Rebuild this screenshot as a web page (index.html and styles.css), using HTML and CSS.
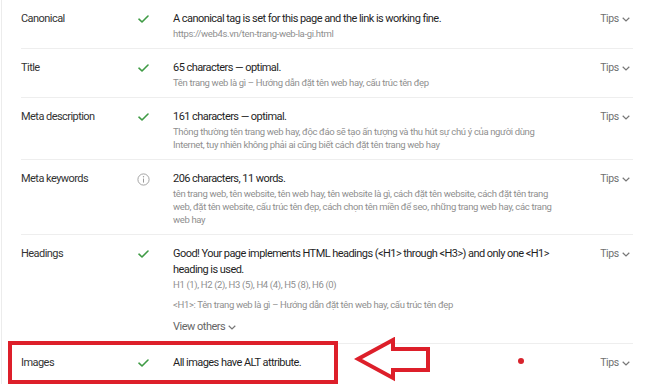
FILE: index.html
```html
<!DOCTYPE html>
<html lang="vi">

<head>
    <meta charset="UTF-8">
    <title>SEO Audit | Web4s</title>
    <link rel="stylesheet" href="styles.css">
</head>

<body>
    <div class="audit">
        <div class="row">
            <div class="label">Canonical</div>
            <div class="status">
                <svg class="check" width="11" height="8" viewBox="0 0 11 8"><polyline points="1,4.2 4,7 10,1" /></svg>
            </div>
            <div class="content">
                <p class="main">A canonical tag is set for this page and the link is working fine.</p>
                <p class="sub">https://web4s.vn/ten-trang-web-la-gi.html</p>
            </div>
            <div class="tips">Tips <svg class="chev" width="8" height="5" viewBox="0 0 8 5"><polyline points="0.7,0.8 4,4 7.3,0.8" /></svg></div>
        </div>

        <div class="row">
            <div class="label">Title</div>
            <div class="status">
                <svg class="check" width="11" height="8" viewBox="0 0 11 8"><polyline points="1,4.2 4,7 10,1" /></svg>
            </div>
            <div class="content">
                <p class="main">65 characters — optimal.</p>
                <p class="sub">Tên trang web là gì – Hướng dẫn đặt tên web hay, cấu trúc tên đẹp</p>
            </div>
            <div class="tips">Tips <svg class="chev" width="8" height="5" viewBox="0 0 8 5"><polyline points="0.7,0.8 4,4 7.3,0.8" /></svg></div>
        </div>

        <div class="row">
            <div class="label">Meta description</div>
            <div class="status">
                <svg class="check" width="11" height="8" viewBox="0 0 11 8"><polyline points="1,4.2 4,7 10,1" /></svg>
            </div>
            <div class="content">
                <p class="main">161 characters — optimal.</p>
                <p class="sub">Thông thường tên trang web hay, độc đáo sẽ tạo ấn tượng và thu hút sự chú ý của người dùng Internet, tuy nhiên không phải ai cũng biết cách đặt tên trang web hay</p>
            </div>
            <div class="tips">Tips <svg class="chev" width="8" height="5" viewBox="0 0 8 5"><polyline points="0.7,0.8 4,4 7.3,0.8" /></svg></div>
        </div>

        <div class="row">
            <div class="label">Meta keywords</div>
            <div class="status">
                <svg class="info" width="13" height="13" viewBox="0 0 13 13">
                    <circle cx="6.5" cy="6.5" r="5.6" />
                    <line x1="6.5" y1="5.6" x2="6.5" y2="9.6" />
                    <circle class="dot" cx="6.5" cy="3.8" r="0.7" />
                </svg>
            </div>
            <div class="content">
                <p class="main">206 characters, 11 words.</p>
                <p class="sub">tên trang web, tên website, tên web hay, tên website là gì, cách đặt tên website, cách đặt tên trang web, đặt tên website, cấu trúc tên đẹp, cách chọn tên miền để seo, những trang web hay, các trang web hay</p>
            </div>
            <div class="tips">Tips <svg class="chev" width="8" height="5" viewBox="0 0 8 5"><polyline points="0.7,0.8 4,4 7.3,0.8" /></svg></div>
        </div>

        <div class="row">
            <div class="label">Headings</div>
            <div class="status">
                <svg class="check" width="11" height="8" viewBox="0 0 11 8"><polyline points="1,4.2 4,7 10,1" /></svg>
            </div>
            <div class="content">
                <p class="main">Good! Your page implements HTML headings (&lt;H1&gt; through &lt;H3&gt;) and only one &lt;H1&gt; heading is used.</p>
                <p class="sub">H1 (1), H2 (2), H3 (5), H4 (4), H5 (8), H6 (0)</p>
                <p class="sub h1-line">&lt;H1&gt;: Tên trang web là gì – Hướng dẫn đặt tên web hay, cấu trúc tên đẹp</p>
                <a class="view-others" href="#">View others <svg class="chev" width="8" height="5" viewBox="0 0 8 5"><polyline points="0.7,0.8 4,4 7.3,0.8" /></svg></a>
            </div>
            <div class="tips">Tips <svg class="chev" width="8" height="5" viewBox="0 0 8 5"><polyline points="0.7,0.8 4,4 7.3,0.8" /></svg></div>
        </div>

        <div class="row last">
            <div class="label">Images</div>
            <div class="status">
                <svg class="check" width="11" height="8" viewBox="0 0 11 8"><polyline points="1,4.2 4,7 10,1" /></svg>
            </div>
            <div class="content">
                <p class="main">All images have ALT attribute.</p>
            </div>
            <div class="tips">Tips <svg class="chev" width="8" height="5" viewBox="0 0 8 5"><polyline points="0.7,0.8 4,4 7.3,0.8" /></svg></div>

            <span class="mark-box"></span>
            <svg class="mark-arrow" width="78" height="45" viewBox="0 0 78 45">
                <polygon points="4,22 39,3 39,12 74,12 74,33 39,33 39,41" />
            </svg>
            <span class="mark-dot"></span>
        </div>
    </div>
</body>

</html>
```

FILE: styles.css
```css
body {
    margin: 0;
    font-family: 'Roboto', 'Noto Sans', sans-serif;
    background: #fff;
    color: #222;
}

.audit {
    padding: 0 17px 0 19px;
    border-left: 1px solid #ececec;
    margin-left: 1px;
    height: 384px;
    overflow: hidden;
}

.row {
    position: relative;
    display: grid;
    grid-template-columns: 108px 28px 398px 1fr;
    padding: 11px 0 8px;
    border-bottom: 1px solid #eeeeee;
}

.row.last {
    border-bottom: none;
}

.label {
    font-size: 11px;
    letter-spacing: -0.55px;
    line-height: 16px;
    color: #333;
}

.status {
    display: flex;
    justify-content: center;
    height: 16px;
    align-items: center;
}

.check polyline {
    fill: none;
    stroke: #3f9b45;
    stroke-width: 1.6;
    stroke-linecap: round;
    stroke-linejoin: round;
}

.info circle {
    fill: none;
    stroke: #9a9a9a;
    stroke-width: 0.9;
}

.info line {
    stroke: #9a9a9a;
    stroke-width: 1;
}

.info .dot {
    fill: #9a9a9a;
    stroke: none;
}

.content {
    padding-left: 16px;
}

.main {
    margin: 0;
    font-size: 11px;
    letter-spacing: -0.55px;
    line-height: 16px;
    color: #1f1f1f;
}

.sub {
    margin: 0;
    font-size: 9.5px;
    letter-spacing: -0.35px;
    line-height: 13px;
    color: #8f8f8f;
}

.h1-line {
    margin-top: 7px;
}

.view-others {
    display: inline-block;
    margin-top: 8px;
    font-size: 11px;
    letter-spacing: -0.5px;
    line-height: 16px;
    color: #666;
    text-decoration: none;
}

.tips {
    justify-self: end;
    margin-right: 3px;
    font-size: 10.5px;
    letter-spacing: -0.4px;
    line-height: 16px;
    color: #707070;
    white-space: nowrap;
}

.chev {
    margin-left: 1px;
    vertical-align: middle;
}

.chev polyline {
    fill: none;
    stroke: #777;
    stroke-width: 1.2;
}

.mark-box {
    position: absolute;
    left: -13px;
    top: -3px;
    width: 322px;
    height: 35px;
    border: 4px solid #dd1f2a;
}

.mark-arrow {
    position: absolute;
    left: 333px;
    top: -7px;
}

.mark-arrow polygon {
    fill: #fff;
    stroke: #dd1f2a;
    stroke-width: 4;
    stroke-linejoin: miter;
}

.mark-dot {
    position: absolute;
    left: 497px;
    top: 14px;
    width: 6px;
    height: 6px;
    border-radius: 50%;
    background: #d8232c;
}
```
